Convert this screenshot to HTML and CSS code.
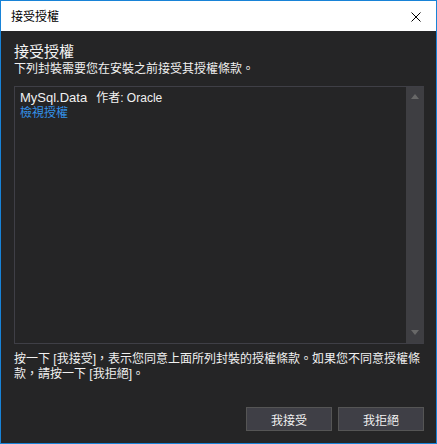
FILE: index.html
```html
<!DOCTYPE html>
<html lang="zh-Hant">
<head>
<meta charset="utf-8">
<title>接受授權</title>
<link rel="stylesheet" href="styles.css">
</head>
<body>
<div class="window">
  <div class="titlebar">
    <span class="title">接受授權</span>
    <span class="close" aria-label="關閉">
      <svg width="10" height="10" viewBox="0 0 10 10"><path d="M0.5 0.5 L9.5 9.5 M9.5 0.5 L0.5 9.5" stroke="#000" stroke-width="1" fill="none"/></svg>
    </span>
  </div>
  <div class="content">
    <div class="heading">接受授權</div>
    <div class="subtitle">下列封裝需要您在安裝之前接受其授權條款。</div>
    <div class="listbox">
      <div class="items">
        <div class="item-line"><span class="pkg">MySql.Data</span><span class="author">作者: Oracle</span></div>
        <div class="link">檢視授權</div>
      </div>
      <div class="scrollbar">
        <span class="arrow up"></span>
        <span class="arrow down"></span>
      </div>
    </div>
    <div class="note">按一下 [我接受]，表示您同意上面所列封裝的授權條款。如果您不同意授權條款，請按一下 [我拒絕]。</div>
    <div class="buttons">
      <button class="btn">我接受</button>
      <button class="btn">我拒絕</button>
    </div>
  </div>
</div>
</body>
</html>
```
FILE: styles.css
```css
html, body {
  margin: 0;
  padding: 0;
  background: #252526;
}
body {
  font-family: "Liberation Sans", "Noto Sans CJK TC", sans-serif;
  font-size: 12px;
}
.window {
  width: 437px;
  height: 444px;
  box-sizing: border-box;
  border: 1px solid #1883d7;
  display: flex;
  flex-direction: column;
  background: #252526;
}
.titlebar {
  height: 30px;
  background: #ffffff;
  display: flex;
  align-items: center;
  justify-content: space-between;
  padding: 0 10px 0 10px;
  flex: none;
}
.title {
  color: #000;
  font-size: 12px;
  line-height: 16px;
  padding-top: 1px;
}
.close {
  width: 10px;
  height: 10px;
  display: flex;
  margin-right: 5px;
  margin-top: 1px;
}
.content {
  flex: 1;
  display: flex;
  flex-direction: column;
  padding: 12px 12px 12px 13px;
  color: #f1f1f1;
}
.heading {
  font-size: 15px;
  line-height: 18px;
  color: #f4f4f4;
}
.subtitle {
  font-size: 12px;
  line-height: 16px;
}
.listbox {
  margin-top: 9px;
  height: 258px;
  box-sizing: border-box;
  border: 1px solid #3f3f46;
  border-right-color: #3e3e42;
  display: flex;
}
.items {
  flex: 1;
  padding: 3px 5px;
}
.item-line {
  line-height: 15px;
}
.pkg {
  font-size: 13px;
  margin-right: 9px;
}
.author {
  font-size: 12px;
}
.link {
  color: #3391e8;
  line-height: 14px;
}
.scrollbar {
  width: 17px;
  background: #3e3e42;
  display: flex;
  flex-direction: column;
  justify-content: space-between;
  align-items: center;
  padding: 7px 0 8px;
}
.arrow {
  width: 0;
  height: 0;
  border-left: 4.5px solid transparent;
  border-right: 4.5px solid transparent;
}
.arrow.up {
  border-bottom: 5px solid #686868;
}
.arrow.down {
  border-top: 5px solid #686868;
}
.note {
  margin-top: 8px;
  line-height: 15px;
  font-size: 12px;
  color: #f1f1f1;
}
.buttons {
  margin-top: auto;
  display: flex;
  justify-content: flex-end;
  gap: 6px;
}
.btn {
  width: 86px;
  height: 24px;
  box-sizing: border-box;
  background: #3f3f46;
  border: 1px solid #555555;
  color: #f1f1f1;
  font-family: "Liberation Sans", "Noto Sans CJK TC", sans-serif;
  font-size: 12px;
  padding: 0;
  margin: 0;
}
```
